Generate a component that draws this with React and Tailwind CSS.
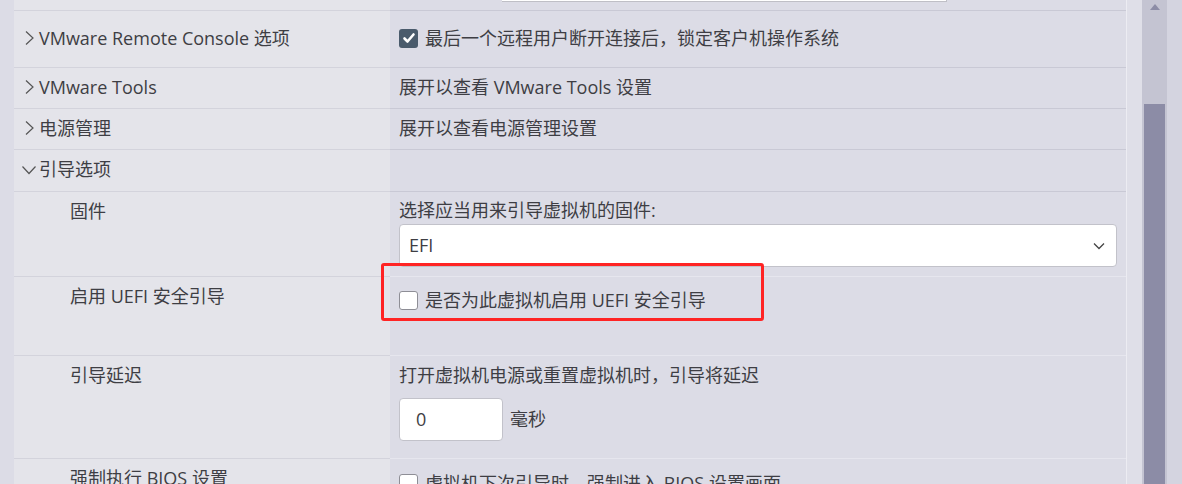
import React from "react";

const Chevron = ({ open }) =>
  open ? (
    <svg width="16" height="14" viewBox="0 0 16 14" className="shrink-0 ml-[-2px] mr-[-2px]">
      <path d="M1.5 3.5 L8 10.5 L14.5 3.5" fill="none" stroke="#555" strokeWidth="1.2" />
    </svg>
  ) : (
    <svg width="12" height="16" viewBox="0 0 12 16" className="shrink-0">
      <path d="M3 1.5 L10 8 L3 14.5" fill="none" stroke="#555" strokeWidth="1.2" />
    </svg>
  );

const Checkbox = ({ checked }) =>
  checked ? (
    <span className="w-[19px] h-[19px] rounded-[3px] bg-[#4a5b6c] flex items-center justify-center shrink-0">
      <svg width="14" height="14" viewBox="0 0 14 14">
        <path d="M2.5 7.5 L5.5 10.5 L11.5 3.5" fill="none" stroke="#fff" strokeWidth="2.6" strokeLinecap="round" strokeLinejoin="round" />
      </svg>
    </span>
  ) : (
    <span className="w-[19px] h-[19px] rounded-[3px] bg-white border border-[#8e8e96] shrink-0" />
  );

const TopRow = ({ label, open, h, children }) => (
  <div className={`flex shrink-0 ${h}`}>
    <div className="w-[376px] bg-[#e4e4ea] border-t border-[#d3d3dc] flex items-center pl-[9px] pb-[2px] gap-[4px]">
      <Chevron open={open} />
      <span>{label}</span>
    </div>
    <div className="flex-1 bg-[#dcdce6] border-t border-[#c9c9d5] flex items-center pl-[9px] pb-[2px]">
      {children}
    </div>
  </div>
);

const SubRow = ({ label, h, children, rightLine = "border-[#c9c9d5]" }) => (
  <div className={`flex shrink-0 ${h}`}>
    <div className="w-[376px] bg-[#e4e4ea] border-t border-[#d3d3dc] pl-[56px] pt-[7px] leading-[24px]">
      {label}
    </div>
    <div className={`flex-1 bg-[#dcdce6] border-t ${rightLine} pl-[9px] pr-[9px]`}>{children}</div>
  </div>
);

export default function App() {
  return (
    <div
      className="relative w-[1182px] h-[484px] overflow-hidden flex bg-[#dcdce6] text-[18px] text-[#3e3e44]"
      style={{ fontFamily: '"Open Sans", "Noto Sans CJK SC", sans-serif' }}
    >
      <div className="w-[14px] bg-[#dcdce6]" />
      <div className="w-[1112px] flex flex-col">
        <div className="flex h-[10px] shrink-0">
          <div className="w-[376px] bg-[#e4e4ea]" />
          <div className="flex-1 bg-[#dcdce6]">
            <div className="ml-[112px] w-[445px] h-[2px] bg-white border-b border-r border-[#bfbfc6]" />
          </div>
        </div>
        <TopRow label="VMware Remote Console 选项" h="h-[57px]">
          <div className="flex items-center gap-[7px]">
            <Checkbox checked />
            <span>最后一个远程用户断开连接后，锁定客户机操作系统</span>
          </div>
        </TopRow>
        <TopRow label="VMware Tools" h="h-[41px]">
          <span>展开以查看 VMware Tools 设置</span>
        </TopRow>
        <TopRow label="电源管理" h="h-[41px]">
          <span>展开以查看电源管理设置</span>
        </TopRow>
        <TopRow label="引导选项" open h="h-[42px]" />
        <SubRow label="固件" h="h-[85px]">
          <div className="pt-[6px] leading-[24px]">选择应当用来引导虚拟机的固件:</div>
          <div className="mt-[2px] h-[43px] bg-white border border-[#c2c2ca] rounded-[4px] flex items-center justify-between pl-[9px] pr-[11px]">
            <span>EFI</span>
            <svg width="12" height="8" viewBox="0 0 12 8">
              <path d="M1 1.5 L6 6.5 L11 1.5" fill="none" stroke="#444" strokeWidth="1.3" />
            </svg>
          </div>
        </SubRow>
        <SubRow label="启用 UEFI 安全引导" h="h-[79px]" rightLine="border-[#e6e6ee]">
          <div className="pt-[11px] flex items-center gap-[7px] leading-[24px]">
            <Checkbox />
            <span>是否为此虚拟机启用 UEFI 安全引导</span>
          </div>
        </SubRow>
        <SubRow label="引导延迟" h="h-[103px]" rightLine="border-[#e6e6ee]">
          <div className="pt-[7px] leading-[24px]">打开虚拟机电源或重置虚拟机时，引导将延迟</div>
          <div className="mt-[11px] flex items-center gap-[7px]">
            <div className="w-[104px] h-[43px] bg-white border border-[#c2c2ca] rounded-[4px] flex items-center pl-[16px]">0</div>
            <span>毫秒</span>
          </div>
        </SubRow>
        <SubRow label="强制执行 BIOS 设置" h="h-[60px]" rightLine="border-[#e6e6ee]">
          <div className="pt-[12px] flex items-center gap-[7px] leading-[24px]">
            <Checkbox />
            <span>虚拟机下次引导时，强制进入 BIOS 设置画面</span>
          </div>
        </SubRow>
      </div>
      <div className="w-[16px] bg-[#dfdfe8] border-l border-[#ececf2]" />
      <div className="w-[25px] bg-[#c4c4d2] flex flex-col items-center">
        <svg width="12" height="8" viewBox="0 0 12 8" className="mt-[3px]">
          <path d="M1 7 L6 1 L11 7 Z" fill="#8c8ca6" />
        </svg>
        <div className="mt-[93px] w-[21px] flex-1 bg-[#8c8ca6]" />
      </div>
      <div className="w-[15px] bg-[#d4d4e0]" />
      <div className="absolute left-[381px] top-[263px] w-[383px] h-[58px] border-[3px] border-[#ff2424] rounded-[3px]" />
    </div>
  );
}
